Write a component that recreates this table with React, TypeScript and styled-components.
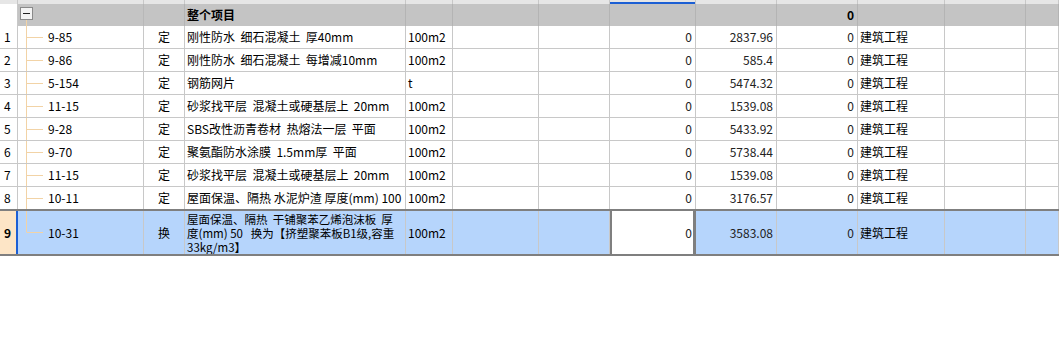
import styled, { createGlobalStyle } from "styled-components";

const GlobalStyle = createGlobalStyle`
  html, body {
    margin: 0;
    padding: 0;
    background: #fff;
  }
  body {
    font-family: "Noto Sans CJK SC", "DejaVu Sans", sans-serif;
    font-size: 12px;
    color: #000;
  }
`;

const COLUMNS = "18px 126px 41px 221px 47px 86px 71px 86px 81px 81px 87px 81px 1fr";
const LINE = "#c8c8c8";
const TREE = "#f2d3a6";

const Sheet = styled.div`
  width: 1059px;
  height: 339px;
  overflow: hidden;
  background: #fff;
`;

const Row = styled.div<{ $height: number; $kind?: "top" | "head" | "body" | "selected" }>`
  display: grid;
  grid-template-columns: ${COLUMNS};
  height: ${(p) => p.$height}px;
  box-sizing: border-box;
  background: ${(p) =>
    p.$kind === "top" ? "#e6e6e6" : p.$kind === "head" ? "#c4c4c4" : p.$kind === "selected" ? "#b6d5fc" : "#fff"};
  border-bottom: ${(p) =>
    p.$kind === "selected" ? "2px solid #7f7f7f" : p.$kind === "top" || p.$kind === "head" ? "none" : `1px solid ${LINE}`};
  border-top: ${(p) => (p.$kind === "selected" ? "2px solid #7f7f7f" : "none")};
  margin-top: ${(p) => (p.$kind === "selected" ? "-1px" : "0")};
`;

const Cell = styled.div<{ $align?: "left" | "right" | "center"; $line?: string }>`
  box-sizing: border-box;
  border-right: 1px solid ${(p) => p.$line ?? LINE};
  display: flex;
  align-items: center;
  justify-content: ${(p) => (p.$align === "right" ? "flex-end" : p.$align === "center" ? "center" : "flex-start")};
  padding: 0 ${(p) => (p.$align === "right" ? "3px" : "0")} 0 ${(p) => (p.$align === "left" || !p.$align ? "2px" : "0")};
  white-space: pre;
  overflow: hidden;
  line-height: 14px;
`;

const TopMark = styled.div<{ $active?: boolean }>`
  box-sizing: border-box;
  border-right: 1px solid #c8c8c8;
  background: ${(p) => (p.$active ? "linear-gradient(#e6e6e6 0 2px, #1c5fd4 2px 4px)" : "transparent")};
`;

const RowNo = styled(Cell)<{ $current?: boolean }>`
  padding-left: 4px;
  background: ${(p) => (p.$current ? "#fde5c6" : "#fff")};
  font-weight: ${(p) => (p.$current ? 700 : 400)};
  border-right: ${(p) => (p.$current ? "2px solid #1c5fd4" : `1px solid ${LINE}`)};
`;

const CodeCell = styled(Cell)<{ $last?: boolean }>`
  padding-left: 30px;
  background:
    linear-gradient(${TREE}, ${TREE}) 8px 0 / 1px ${(p) => (p.$last ? "50%" : "100%")} no-repeat,
    linear-gradient(${TREE}, ${TREE}) 9px 50% / 16px 1px no-repeat;
`;

const HeadTree = styled(Cell)`
  position: relative;
  background: linear-gradient(${TREE}, ${TREE}) 8px 16px / 1px 100% no-repeat;
`;

const Toggle = styled.span`
  position: absolute;
  left: 2px;
  top: 3px;
  width: 13px;
  height: 13px;
  box-sizing: border-box;
  border: 1px solid #8a8a8a;
  background: #f4f4f4;
  &::after {
    content: "";
    position: absolute;
    left: 2px;
    right: 2px;
    top: 5px;
    height: 1px;
    background: #222;
  }
`;

const Bold = styled.span`
  font-weight: 700;
`;

const Num = styled.span`
  color: #222;
`;

const Desc = styled.div`
  display: flex;
  flex-direction: column;
  line-height: 14px;
  font-size: 11.5px;
`;

const ActiveCell = styled(Cell)`
  background: #fff;
  box-shadow: inset 2px 0 0 #7f7f7f, inset -2px 0 0 #7f7f7f;
`;

type Item = {
  code: string;
  type: string;
  name: string;
  unit: string;
  price: string;
};

const items: Item[] = [
  { code: "9-85", type: "定", name: "刚性防水  细石混凝土  厚40mm", unit: "100m2", price: "2837.96" },
  { code: "9-86", type: "定", name: "刚性防水  细石混凝土  每增减10mm", unit: "100m2", price: "585.4" },
  { code: "5-154", type: "定", name: "钢筋网片", unit: "t", price: "5474.32" },
  { code: "11-15", type: "定", name: "砂浆找平层  混凝土或硬基层上  20mm", unit: "100m2", price: "1539.08" },
  { code: "9-28", type: "定", name: "SBS改性沥青卷材  热熔法一层  平面", unit: "100m2", price: "5433.92" },
  { code: "9-70", type: "定", name: "聚氨酯防水涂膜  1.5mm厚  平面", unit: "100m2", price: "5738.44" },
  { code: "11-15", type: "定", name: "砂浆找平层  混凝土或硬基层上  20mm", unit: "100m2", price: "1539.08" },
  { code: "10-11", type: "定", name: "屋面保温、隔热 水泥炉渣 厚度(mm) 100", unit: "100m2", price: "3176.57" },
];

export default function App() {
  return (
    <Sheet>
      <GlobalStyle />
      <Row $height={4} $kind="top">
        {Array.from({ length: 13 }).map((_, i) => (
          <TopMark key={i} $active={i === 7} />
        ))}
      </Row>
      <Row $height={22} $kind="head">
        <RowNo />
        <HeadTree $line="#b8b8b8">
          <Toggle />
        </HeadTree>
        <Cell $line="#b4b4b4" />
        <Cell $line="#b4b4b4">
          <Bold>整个项目</Bold>
        </Cell>
        <Cell $line="#b4b4b4" />
        <Cell $line="#b4b4b4" />
        <Cell $line="#b4b4b4" />
        <Cell $line="#b4b4b4" />
        <Cell $line="#b4b4b4" />
        <Cell $line="#b4b4b4" $align="right">
          <Bold>0</Bold>
        </Cell>
        <Cell $line="#b4b4b4" />
        <Cell $line="#b4b4b4" />
        <Cell $line="#b4b4b4" />
      </Row>
      {items.map((it, i) => (
        <Row key={i} $height={23} $kind="body">
          <RowNo>{i + 1}</RowNo>
          <CodeCell>{it.code}</CodeCell>
          <Cell $align="center">{it.type}</Cell>
          <Cell>{it.name}</Cell>
          <Cell>{it.unit}</Cell>
          <Cell />
          <Cell />
          <Cell $align="right">
            <Num>0</Num>
          </Cell>
          <Cell $align="right">
            <Num>{it.price}</Num>
          </Cell>
          <Cell $align="right">
            <Num>0</Num>
          </Cell>
          <Cell>建筑工程</Cell>
          <Cell />
          <Cell />
        </Row>
      ))}
      <Row $height={47} $kind="selected">
        <RowNo $current>9</RowNo>
        <CodeCell $last>10-31</CodeCell>
        <Cell $align="center">换</Cell>
        <Cell>
          <Desc>
            <span>屋面保温、隔热  干铺聚苯乙烯泡沫板  厚</span>
            <span>度(mm) 50   换为【挤塑聚苯板B1级,容重</span>
            <span>33kg/m3】</span>
          </Desc>
        </Cell>
        <Cell>100m2</Cell>
        <Cell />
        <Cell />
        <ActiveCell $align="right" $line="#7f7f7f">
          <Num>0</Num>
        </ActiveCell>
        <Cell $align="right">
          <Num>3583.08</Num>
        </Cell>
        <Cell $align="right">
          <Num>0</Num>
        </Cell>
        <Cell>建筑工程</Cell>
        <Cell />
        <Cell />
      </Row>
    </Sheet>
  );
}
